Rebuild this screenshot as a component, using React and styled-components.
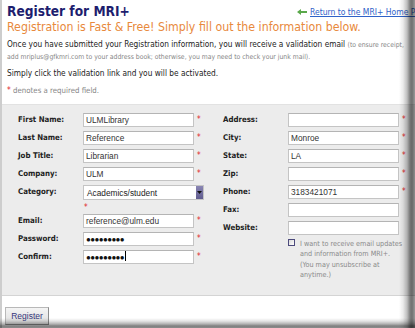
import React from 'react';
import styled, { createGlobalStyle } from 'styled-components';

const Global = createGlobalStyle`
  html, body { margin: 0; padding: 0; background: #fff; }
  body { width: 415px; height: 328px; overflow: hidden; }
`;

const sans = `"DejaVu Sans Condensed", "DejaVu Sans", Verdana, sans-serif`;
const arial = `"Liberation Sans", Arial, sans-serif`;

const Stage = styled.div`
  position: relative;
  width: 415px;
  height: 328px;
  overflow: hidden;
  background: #fff;
`;

const Frame = styled.div`
  width: 430px;
  height: 328px;
  border-left: 2px solid #cdcdcd;
  background: #fff;
  font-family: ${sans};
  font-stretch: condensed;
  display: flex;
  flex-direction: column;
`;

const ShadowRight = styled.div`
  position: absolute;
  top: 0;
  right: 0;
  width: 16px;
  height: 100%;
  background: linear-gradient(
    to right,
    rgba(0, 0, 0, 0) 0px,
    rgba(0, 0, 0, 0.08) 4px,
    rgba(0, 0, 0, 0.25) 8px,
    rgba(0, 0, 0, 0.5) 11px,
    rgba(0, 0, 0, 0.56) 13px,
    rgba(0, 0, 0, 0.4) 16px
  );
`;

const ShadowBottom = styled.div`
  position: absolute;
  left: 0;
  bottom: 0;
  width: 100%;
  height: 10px;
  background: linear-gradient(
    to bottom,
    rgba(0, 0, 0, 0) 0px,
    rgba(0, 0, 0, 0.1) 3px,
    rgba(0, 0, 0, 0.3) 6px,
    rgba(0, 0, 0, 0.5) 8px,
    rgba(0, 0, 0, 0.45) 10px
  );
`;

const Header = styled.div`
  display: flex;
  align-items: flex-start;
  padding: 3px 0 0 5px;
`;

const Title = styled.h1`
  flex: 0 0 290px;
  margin: 0;
  font-size: 13.6px;
  line-height: 16px;
  font-weight: bold;
  color: #1d1d6e;
`;

const BackLink = styled.a`
  flex: none;
  display: flex;
  align-items: center;
  gap: 3px;
  margin-top: 4px;
  font-size: 8.5px;
  color: #2f62c8;
  text-decoration: underline;
  white-space: nowrap;
`;

const Lead = styled.div`
  margin-top: 1px;
  padding-left: 5px;
  font-size: 12.25px;
  line-height: 14px;
  color: #e8893c;
  white-space: nowrap;
`;

const Para = styled.p`
  margin: ${(p) => p.$mt || 0}px 0 0;
  padding-left: 5px;
  font-size: 8.25px;
  line-height: ${(p) => p.$lh || 11}px;
  color: #222;
  white-space: nowrap;
`;

const Small = styled.span`
  font-size: ${(p) => p.$size || 6.8}px;
  color: #858585;
`;

const Red = styled.span`
  color: #e02424;
`;

const Panel = styled.div`
  flex: none;
  margin-top: 8px;
  height: 182px;
  background: #ececec;
  border-top: 1px solid #e2e2e2;
  border-bottom: 1px solid #d4d4d4;
  padding: 8px 0 0 16px;
  display: flex;
`;

const Column = styled.div`
  flex: none;
  width: ${(p) => p.$w}px;
  display: flex;
  flex-direction: column;
`;

const Row = styled.div`
  display: flex;
  align-items: flex-start;
  height: ${(p) => p.$h || 14}px;
  margin-bottom: 4px;
`;

const Label = styled.label`
  flex: 0 0 65px;
  font-size: 7.8px;
  font-weight: bold;
  color: #222;
  line-height: 14px;
`;

const Field = styled.div`
  flex: none;
  box-sizing: border-box;
  width: 111px;
  height: 14px;
  background: #fff;
  border: 1px solid #c4c4c4;
  border-top-color: #b4b4b4;
  padding: 0 2px;
  font-family: ${arial};
  font-size: 8.3px;
  line-height: 12px;
  color: #333;
  white-space: nowrap;
  overflow: hidden;
`;

const Dots = styled.span`
  font-size: 8px;
  letter-spacing: -0.6px;
  color: #111;
`;

const Caret = styled.span`
  display: inline-block;
  width: 1px;
  height: 10px;
  background: #000;
  vertical-align: -1px;
  margin-left: 1px;
`;

const Star = styled.span`
  flex: none;
  margin: 3px 0 0 3px;
  font-size: 8px;
  line-height: 8px;
  color: #e02424;
`;

const SelectBox = styled.div`
  flex: none;
  box-sizing: border-box;
  width: 121px;
  height: 15px;
  background: #fff;
  border: 1px solid #c4c4c4;
  display: flex;
  align-items: center;
  font-family: ${arial};
  font-size: 8.3px;
  color: #222;
`;

const SelectText = styled.span`
  flex: 1;
  padding-left: 3px;
`;

const SelectBtn = styled.span`
  flex: none;
  width: 7px;
  height: 13px;
  background: linear-gradient(#8a86b4, #5f5b8e);
  display: flex;
  align-items: center;
  justify-content: center;
`;

const StarLine = styled.div`
  height: 6px;
  margin-bottom: 4px;
  padding-left: 66px;
  font-size: 8px;
  line-height: 8px;
  color: #e02424;
`;

const OptIn = styled.div`
  display: flex;
  align-items: flex-start;
  padding-left: 65px;
`;

const Check = styled.span`
  flex: none;
  box-sizing: border-box;
  width: 7px;
  height: 7px;
  border: 1px solid #4c4a7c;
  background: linear-gradient(135deg, #d8d8d8, #fff);
`;

const OptText = styled.div`
  margin-left: 5px;
  font-size: 7.2px;
  line-height: 10.3px;
  color: #8a8a8a;
  white-space: nowrap;
`;

const Footer = styled.div`
  display: flex;
  padding: 11px 0 0 3px;
`;

const Button = styled.button`
  box-sizing: border-box;
  width: 44px;
  height: 18px;
  padding: 0;
  font-family: ${arial};
  font-size: 8.5px;
  color: #35357a;
  background: linear-gradient(#f4f4f4, #dedede);
  border: 1px solid #b8b8b8;
  border-right-color: #8c8c8c;
  border-bottom-color: #8c8c8c;
`;

const Arrow = () => (
  <svg width="10" height="6" viewBox="0 0 10 6">
    <path d="M0 3 L4 0 L4 2 L10 2 L10 4 L4 4 L4 6 Z" fill="#5aa84a" />
  </svg>
);

const Input = ({ label, value, star = true, children }) => (
  <Row>
    <Label>{label}</Label>
    <Field>{children || value}</Field>
    {star && <Star>*</Star>}
  </Row>
);

export default function App() {
  return (
    <Stage>
      <Global />
      <Frame>
        <Header>
          <Title>Register for MRI+</Title>
          <BackLink>
            <Arrow />
            Return to the MRI+ Home Page
          </BackLink>
        </Header>
        <Lead>Registration is Fast &amp; Free! Simply fill out the information below.</Lead>
        <Para $mt={5} $lh={10.5}>
          Once you have submitted your Registration information, you will receive a validation email{' '}
          <Small>(to ensure receipt,</Small>
          <br />
          <Small>add mriplus@gfkmri.com to your address book; otherwise, you may need to check your junk mail).</Small>
        </Para>
        <Para $mt={6}>Simply click the validation link and you will be activated.</Para>
        <Para $mt={6}>
          <Red>*</Red> <Small $size={7.8}>denotes a required field.</Small>
        </Para>
        <Panel>
          <Column $w={205}>
            <Input label="First Name:" value="ULMLibrary" />
            <Input label="Last Name:" value="Reference" />
            <Input label="Job Title:" value="Librarian" />
            <Input label="Company:" value="ULM" />
            <Row $h={15}>
              <Label>Category:</Label>
              <SelectBox>
                <SelectText>Academics/student</SelectText>
                <SelectBtn>
                  <svg width="5" height="3" viewBox="0 0 5 3">
                    <path d="M0 0 L5 0 L2.5 3 Z" fill="#111" />
                  </svg>
                </SelectBtn>
              </SelectBox>
            </Row>
            <StarLine>*</StarLine>
            <Input label="Email:" value="reference@ulm.edu" />
            <Input label="Password:">
              <Dots>●●●●●●●●●</Dots>
            </Input>
            <Input label="Confirm:">
              <Dots>●●●●●●●●●</Dots>
              <Caret />
            </Input>
          </Column>
          <Column $w={190}>
            <Input label="Address:" value="" />
            <Input label="City:" value="Monroe" />
            <Input label="State:" value="LA" />
            <Input label="Zip:" value="" />
            <Input label="Phone:" value="3183421071" />
            <Input label="Fax:" value="" star={false} />
            <Input label="Website:" value="" star={false} />
            <OptIn>
              <Check />
              <OptText>
                I want to receive email updates
                <br />
                and information from MRI+.
                <br />
                (You may unsubscribe at
                <br />
                anytime.)
              </OptText>
            </OptIn>
          </Column>
        </Panel>
        <Footer>
          <Button>Register</Button>
        </Footer>
      </Frame>
      <ShadowRight />
      <ShadowBottom />
    </Stage>
  );
}
